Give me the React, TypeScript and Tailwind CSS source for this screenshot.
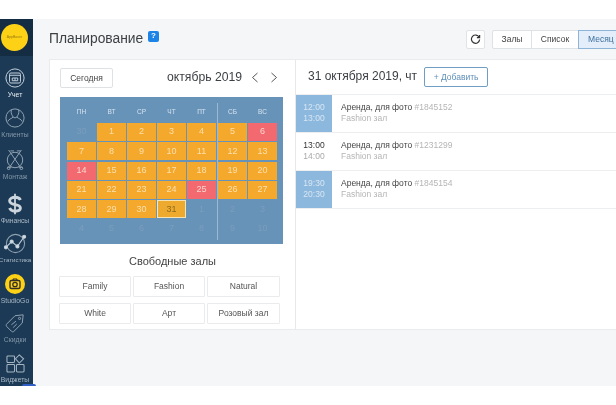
const rows: [string, string][] = [
  ["12:00", "13:00"],
  ["13:00", "14:00"],
  ["19:30", "20:30"],
]

const ids = ["#1845152", "#1231299", "#1845154"]

const weekdays = ["ПН", "ВТ", "СР", "ЧТ", "ПТ"]
const workDays = [
  [30, 1, 2, 3, 4],
  [7, 8, 9, 10, 11],
  [14, 15, 16, 17, 18],
  [21, 22, 23, 24, 25],
  [28, 29, 30, 31, 1],
  [4, 5, 6, 7, 8],
]
const weekendDays = [
  [5, 6],
  [12, 13],
  [19, 20],
  [26, 27],
  [2, 3],
  [9, 10],
]

function Day({ n, row }: { n: number; row: number }) {
  const muted = (row === 0 && n === 30) || row === 5 || (row === 4 && n < 5)
  if (muted) {
    return <div className="flex h-[18px] items-center justify-center text-[#7c9dbd]">{n}</div>
  }
  if (n === 31) {
    return <div className="flex h-[18px] items-center justify-center border border-[#f6e3b4] bg-[#eeaa2e] text-[#8a6a20]">{n}</div>
  }
  const red = n === 6 || n === 14 || n === 25
  return (
    <div className={red ? "flex h-[18px] items-center justify-center bg-[#f2696f] text-[#fbd5cf]" : "flex h-[18px] items-center justify-center bg-[#f5a92c] text-[#fbdfae]"}>
      {n}
    </div>
  )
}

function Calendar() {
  return (
    <div className="ml-[10px] mr-[12px] mt-[9px] flex h-[147px] bg-[#6793b9] pl-[7px] pt-[6px] text-[9px]">
      <div className="h-[137px] border-r border-[#9bb9d3] pr-px">
        <div className="grid grid-cols-[repeat(5,29px)] gap-x-px gap-y-[1.33px]">
          {weekdays.map((d) => (
            <div key={d} className="flex h-[18.7px] items-center justify-center text-[6.5px] text-[#d5e2ee]">{d}</div>
          ))}
          {workDays.flatMap((r, i) => r.map((n, j) => <Day key={`${i}-${j}`} n={n} row={i} />))}
        </div>
      </div>
      <div className="grid h-fit grid-cols-[repeat(2,29px)] gap-x-px gap-y-[1.33px]">
        {["СБ", "ВС"].map((d) => (
          <div key={d} className="flex h-[18.7px] items-center justify-center text-[6.5px] text-[#d5e2ee]">{d}</div>
        ))}
        {weekendDays.flatMap((r, i) => r.map((n, j) => <Day key={`${i}-${j}`} n={n} row={i} />))}
      </div>
    </div>
  )
}

function NavIcon({ name }: { name: string }) {
  const p = { fill: "none", stroke: "#c4d0da", strokeWidth: 1.1 }
  if (name === "uchet")
    return (
      <svg width="20" height="20" viewBox="0 0 22 22" {...p}>
        <circle cx="11" cy="11" r="10" />
        <rect x="5" y="5.5" width="12" height="11" rx="1.5" />
        <path d="M5 8h12M8 11v3M11 11v3M14 11v3M8 11h6M8 14h6" />
      </svg>
    )
  if (name === "clients")
    return (
      <svg width="20" height="22" viewBox="0 0 22 24" {...p} stroke="#8fa2b2">
        <circle cx="11" cy="12" r="10" />
        <path d="M7 3c-1 4 1 6 2 8-2 2-5 2-6 5M15 3c1 4-1 6-2 8 2 2 5 2 6 5M9 11c1 1 3 1 4 0" />
      </svg>
    )
  if (name === "montage")
    return (
      <svg width="20" height="22" viewBox="0 0 22 24" {...p} stroke="#8fa2b2">
        <circle cx="11" cy="12" r="8.5" />
        <path d="M4 1l13 19M18 1L5 20M6 2h4M13 2h4M3 20h4M15 20h4" />
        <circle cx="4" cy="21" r="1.5" />
        <circle cx="18" cy="21" r="1.5" />
      </svg>
    )
  if (name === "finance")
    return (
      <svg width="18" height="28" viewBox="0 0 20 26" fill="none">
        <path d="M16 8.5C15 6 13 5.5 10 5.5S4 7 4 9.5c0 6 12 2.5 12 8 0 2.5-3 3.5-6 3.5s-5-1-6-3.5" stroke="#ccd5dd" strokeWidth="3.2" />
        <path d="M10 1.5v23" stroke="#ccd5dd" strokeWidth="2" />
      </svg>
    )
  if (name === "stats")
    return (
      <svg width="25" height="23" viewBox="0 0 26 24" {...p}>
        <circle cx="13" cy="12" r="9.5" stroke="#8ea1b1" />
        <path d="M3 16l6-6 6 5 7-10" />
        <circle cx="3" cy="16" r="1.6" fill="#d5dde4" />
        <circle cx="9" cy="10" r="1.6" fill="#d5dde4" />
        <circle cx="15" cy="15" r="1.6" fill="#d5dde4" />
        <circle cx="22" cy="5" r="1.6" fill="#d5dde4" />
      </svg>
    )
  if (name === "studio")
    return (
      <svg width="20" height="20" viewBox="0 0 20 20" fill="none">
        <circle cx="10" cy="10" r="10" fill="#fcd116" />
        <rect x="5" y="6.5" width="10" height="8" rx="1.5" stroke="#33302a" strokeWidth="1.4" />
        <circle cx="10" cy="10.5" r="2.2" stroke="#33302a" strokeWidth="1.3" />
        <path d="M7.5 6.5l1-1.5h3l1 1.5" stroke="#33302a" strokeWidth="1.2" />
      </svg>
    )
  if (name === "sale")
    return (
      <svg width="20" height="20" viewBox="0 0 22 22" {...p} stroke="#8fa2b2">
        <path d="M20 2l-9 1L2 12c-1 1-1 2 0 3l5 5c1 1 2 1 3 0l9-9z" />
        <circle cx="16" cy="6" r="1.2" />
        <path d="M7 13l5-4M9 16l4-4" />
      </svg>
    )
  return (
    <svg width="19" height="19" viewBox="0 0 20 20" {...p} stroke="#a6b5c2">
      <rect x="1" y="2" width="8" height="7" rx="1" />
      <path d="M14 1l4.500 4-4.500 4.500L10 5z" />
      <rect x="1" y="11" width="8" height="8" rx="1" />
      <rect x="11" y="11" width="8" height="8" rx="1" />
    </svg>
  )
}

const nav = [
  { id: "uchet", label: "Учет", h: "h-[40px]", text: "text-[6.8px] text-[#e8edf2]" },
  { id: "clients", label: "Клиенты", h: "h-[42px]", text: "text-[6.8px] text-[#8296a8]" },
  { id: "montage", label: "Монтаж", h: "h-[44px]", text: "text-[6.8px] text-[#8296a8]" },
  { id: "finance", label: "Финансы", h: "h-[39px]", text: "text-[6.8px] text-[#a9b8c5]" },
  { id: "stats", label: "Статистика", h: "h-[41px]", text: "text-[6.2px] text-[#a9b8c5]" },
  { id: "studio", label: "StudioGo", h: "h-[39px]", text: "text-[6.8px] text-[#a9b8c5]" },
  { id: "sale", label: "Скидки", h: "h-[40px]", text: "text-[6.8px] text-[#8296a8]" },
  { id: "widgets", label: "Виджеты", h: "h-[35px]", text: "text-[6.8px] text-[#a9b8c5]" },
]

function Sidebar() {
  return (
    <aside className="relative z-10 flex h-full w-[33px] shrink-0 flex-col bg-[#1c3a55]">
      <div className="flex h-[37px] shrink-0 items-center bg-[#152d42] pl-px">
        <div className="flex h-[27px] w-[27px] items-center justify-center rounded-full bg-[#fcd116] text-[3.5px] text-[#9a7a10]">AppBoxer</div>
      </div>
      <nav className="flex flex-col pr-[3px] pt-[10px]">
        {nav.map((n) => (
          <div key={n.id} className={`flex shrink-0 flex-col items-center ${n.h}`}>
            <div className="flex h-[24px] items-center justify-center">
              <NavIcon name={n.id} />
            </div>
            <span className={`whitespace-nowrap leading-[9px] ${n.text}`}>{n.label}</span>
          </div>
        ))}
      </nav>
      <div className="absolute bottom-0 left-[22px] h-[2px] w-[14px] rounded-t-full bg-[#2f5fc4]" />
    </aside>
  )
}

export default function App() {
  return (
    <div className="h-[405px] w-[616px] overflow-hidden bg-white pt-[19px] font-['Liberation_Sans',sans-serif] blur-[0.4px]">
      <div className="flex h-[367px]">
        <Sidebar />
        <main className="min-w-0 flex-1 overflow-hidden bg-[#f5f6f7] pl-[16px]">
          <header className="flex h-[40px] w-[620px] items-center">
            <h1 className="w-[94px] shrink-0 whitespace-nowrap text-[13.8px] leading-[38px] text-[#3c3f43]">Планирование</h1>
            <span className="mb-[6px] ml-[5px] flex h-[11px] w-[11px] shrink-0 items-center justify-center rounded-[2px] bg-[#1c84e6] text-[8px] font-bold text-white">?</span>
            <button className="ml-[307px] flex h-[19px] w-[19px] shrink-0 items-center justify-center rounded-[2px] border border-[#e1e4e7] bg-white">
              <svg width="11" height="11" viewBox="0 0 12 12" fill="none" stroke="#333" strokeWidth="1.3">
                <path d="M10 3.5A4.5 4.5 0 1 0 10.5 6" />
                <path d="M10.5 1v3H7.5" />
              </svg>
            </button>
            <div className="ml-[7px] flex h-[19px] shrink-0 text-[8.5px] text-[#444]">
              <span className="flex w-[40px] items-center justify-center rounded-l-[2px] border border-[#dfe2e5] bg-white">Залы</span>
              <span className="-ml-px flex w-[48px] items-center justify-center border border-[#dfe2e5] bg-white">Список</span>
              <span className="-ml-px flex w-[50px] items-center border border-[#8eb4d8] bg-[#e4eefa] pl-[9px] text-[#3d6f9f]">Месяц</span>
            </div>
          </header>
          <section className="flex h-[271px] w-[580px] border border-[#e9ebed] bg-white">
            <div className="w-[246px] shrink-0 border-r border-[#e6e8ea]">
              <div className="flex h-[28px] items-end pl-[10px]">
                <button className="flex h-[20px] w-[53px] items-center justify-center rounded-[2px] border border-[#dfe2e5] text-[8.5px] text-[#444]">Сегодня</button>
                <span className="mb-[3px] ml-[54px] text-[12.2px] leading-[15px] text-[#3c3f43]">октябрь 2019</span>
                <svg className="mb-[5px] ml-[9px]" width="8" height="11" viewBox="0 0 8 11" fill="none" stroke="#555" strokeWidth="1">
                  <path d="M6.5 1L1.5 5.5l5 4.5" />
                </svg>
                <svg className="mb-[5px] ml-[11px]" width="8" height="11" viewBox="0 0 8 11" fill="none" stroke="#555" strokeWidth="1">
                  <path d="M1.5 1l5 4.5-5 4.5" />
                </svg>
              </div>
              <Calendar />
              <div className="mt-[10px] text-center text-[11px] leading-[14px] text-[#444]">Свободные залы</div>
              <div className="mt-[8px] grid grid-cols-[72px_72px_73px] gap-x-[2px] gap-y-[6px] pl-[9px] text-[8.5px] text-[#555]">
                {["Family", "Fashion", "Natural", "White", "Арт", "Розовый зал"].map((r) => (
                  <div key={r} className="flex h-[21px] items-center justify-center rounded-[1px] border border-[#e9ebed]">{r}</div>
                ))}
              </div>
            </div>
            <div className="min-w-0 flex-1">
              <div className="flex h-[35px] items-end border-b border-[#eceef0] pb-[7px] pl-[12px]">
                <span className="mb-[3px] text-[12px] leading-[16px] text-[#3c3f43]">31 октября 2019, чт</span>
                <button className="ml-[7px] flex h-[20px] w-[64px] items-center justify-center rounded-[2px] border border-[#6f9dc4] text-[8.5px] text-[#5f90ba]">+ Добавить</button>
              </div>
              {rows.map(([from, to], i) => (
                <div key={from} className="flex h-[38px] border-b border-[#eceef0] text-[8.5px] leading-[11px]">
                  <div className={i === 1 ? "flex w-[36px] flex-col items-center justify-center pb-[2px] text-[#aaa]" : "flex w-[36px] flex-col items-center justify-center bg-[#8db8dd] pb-[2px] text-[#d7e6f3]"}>
                    <span className={i === 1 ? "text-[#333]" : ""}>{from}</span>
                    <span>{to}</span>
                  </div>
                  <div className="flex flex-col justify-center pb-[2px] pl-[9px]">
                    <span className="text-[#444]">
                      Аренда, для фото <span className="text-[#b5b5b5]">{ids[i]}</span>
                    </span>
                    <span className="text-[#b5b5b5]">Fashion зал</span>
                  </div>
                </div>
              ))}
            </div>
          </section>
        </main>
      </div>
    </div>
  )
}
